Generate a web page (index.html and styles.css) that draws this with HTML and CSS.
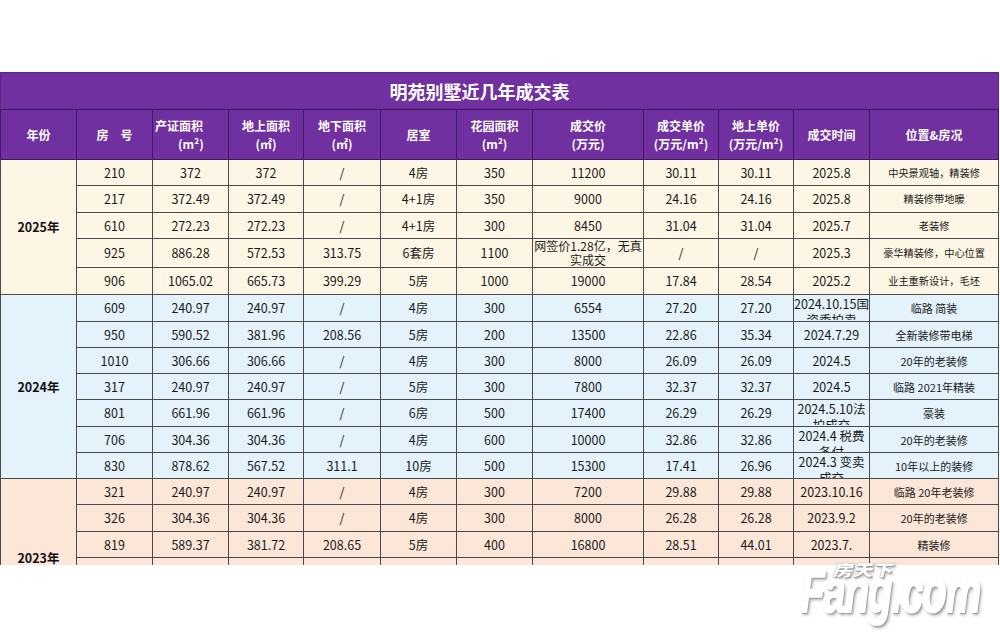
FILE: index.html
```html
<!DOCTYPE html>
<html lang="zh-CN">
<head>
<meta charset="utf-8">
<title>明苑别墅近几年成交表</title>
<link rel="stylesheet" href="styles.css">
</head>
<body>
<div class="page">
  <div class="clip">
    <table class="deals">
      <colgroup>
        <col class="c76"><col class="c76"><col class="c76"><col class="c75"><col class="c77"><col class="c76">
        <col class="c76"><col class="c111"><col class="c75"><col class="c75"><col class="c76"><col class="c129">
      </colgroup>
      <thead>
        <tr class="title-row"><th colspan="12">明苑别墅近几年成交表</th></tr>
        <tr class="head-row">
          <th>年份</th>
          <th>房　号</th>
          <th class="hl"><span class="ln">产证面积</span><span class="ln ind">(m²)</span></th>
          <th><span class="ln">地上面积</span><span class="ln">(㎡)</span></th>
          <th><span class="ln">地下面积</span><span class="ln">(㎡)</span></th>
          <th>居室</th>
          <th><span class="ln">花园面积</span><span class="ln">(m²)</span></th>
          <th><span class="ln">成交价</span><span class="ln">(万元)</span></th>
          <th><span class="ln">成交单价</span><span class="ln">(万元/m²)</span></th>
          <th><span class="ln">地上单价</span><span class="ln">(万元/m²)</span></th>
          <th>成交时间</th>
          <th>位置&amp;房况</th>
        </tr>
      </thead>
      <tbody class="g25">
        <tr class="h26"><td class="year" rowspan="5">2025年</td><td>210</td><td>372</td><td>372</td><td>/</td><td>4房</td><td>350</td><td>11200</td><td>30.11</td><td>30.11</td><td>2025.8</td><td class="pos s10">中央景观轴，精装修</td></tr>
        <tr class="h27"><td>217</td><td>372.49</td><td>372.49</td><td>/</td><td>4+1房</td><td>350</td><td>9000</td><td>24.16</td><td>24.16</td><td>2025.8</td><td class="pos s10">精装修带地暖</td></tr>
        <tr class="h26"><td>610</td><td>272.23</td><td>272.23</td><td>/</td><td>4+1房</td><td>300</td><td>8450</td><td>31.04</td><td>31.04</td><td>2025.7</td><td class="pos s10">老装修</td></tr>
        <tr class="h29"><td>925</td><td>886.28</td><td>572.53</td><td>313.75</td><td>6套房</td><td>1100</td><td class="two">网签价1.28亿，无真<br>实成交</td><td>/</td><td>/</td><td>2025.3</td><td class="pos s10">豪华精装修，中心位置</td></tr>
        <tr class="h27"><td>906</td><td>1065.02</td><td>665.73</td><td>399.29</td><td>5房</td><td>1000</td><td>19000</td><td>17.84</td><td>28.54</td><td>2025.2</td><td class="pos s10">业主重新设计，毛坯</td></tr>
      </tbody>
      <tbody class="g24">
        <tr class="h27"><td class="year" rowspan="7">2024年</td><td>609</td><td>240.97</td><td>240.97</td><td>/</td><td>4房</td><td>300</td><td>6554</td><td>27.20</td><td>27.20</td><td class="cut"><div class="cutbox">2024.10.15国<br>资委拍卖</div></td><td class="pos">临路 简装</td></tr>
        <tr class="h26"><td>950</td><td>590.52</td><td>381.96</td><td>208.56</td><td>5房</td><td>200</td><td>13500</td><td>22.86</td><td>35.34</td><td>2024.7.29</td><td class="pos">全新装修带电梯</td></tr>
        <tr class="h26"><td>1010</td><td>306.66</td><td>306.66</td><td>/</td><td>4房</td><td>300</td><td>8000</td><td>26.09</td><td>26.09</td><td>2024.5</td><td class="pos">20年的老装修</td></tr>
        <tr class="h26"><td>317</td><td>240.97</td><td>240.97</td><td>/</td><td>5房</td><td>300</td><td>7800</td><td>32.37</td><td>32.37</td><td>2024.5</td><td class="pos">临路 2021年精装</td></tr>
        <tr class="h27"><td>801</td><td>661.96</td><td>661.96</td><td>/</td><td>6房</td><td>500</td><td>17400</td><td>26.29</td><td>26.29</td><td class="cut"><div class="cutbox">2024.5.10法<br>拍成交</div></td><td class="pos">豪装</td></tr>
        <tr class="h26"><td>706</td><td>304.36</td><td>304.36</td><td>/</td><td>4房</td><td>600</td><td>10000</td><td>32.86</td><td>32.86</td><td class="cut"><div class="cutbox">2024.4 税费<br>各付</div></td><td class="pos">20年的老装修</td></tr>
        <tr class="h26"><td>830</td><td>878.62</td><td>567.52</td><td>311.1</td><td>10房</td><td>500</td><td>15300</td><td>17.41</td><td>26.96</td><td class="cut"><div class="cutbox">2024.3 变卖<br>成交</div></td><td class="pos">10年以上的装修</td></tr>
      </tbody>
      <tbody class="g23">
        <tr class="h26"><td class="year" rowspan="6">2023年</td><td>321</td><td>240.97</td><td>240.97</td><td>/</td><td>4房</td><td>300</td><td>7200</td><td>29.88</td><td>29.88</td><td>2023.10.16</td><td class="pos">临路 20年老装修</td></tr>
        <tr class="h27"><td>326</td><td>304.36</td><td>304.36</td><td>/</td><td>4房</td><td>300</td><td>8000</td><td>26.28</td><td>26.28</td><td>2023.9.2</td><td class="pos">20年的老装修</td></tr>
        <tr class="h26"><td>819</td><td>589.37</td><td>381.72</td><td>208.65</td><td>5房</td><td>400</td><td>16800</td><td>28.51</td><td>44.01</td><td>2023.7.</td><td class="pos">精装修</td></tr>
        <tr class="h26"><td></td><td></td><td></td><td></td><td>4房</td><td></td><td></td><td></td><td></td><td></td><td class="pos">精装修带地暖</td></tr>
        <tr class="h26"><td></td><td></td><td></td><td></td><td></td><td></td><td></td><td></td><td></td><td></td><td></td></tr>
        <tr class="h27"><td></td><td></td><td></td><td></td><td></td><td></td><td></td><td></td><td></td><td></td><td></td></tr>
      </tbody>
    </table>
  </div>
  <div class="watermark" aria-label="房天下 Fang.com">
    <span class="wm-cn">房天下</span>
    <span class="wm-en">Fang.com</span>
  </div>
</div>
</body>
</html>
```

FILE: styles.css
```css
html, body {
  margin: 0;
  padding: 0;
  background: #ffffff;
}

.page {
  position: relative;
  width: 1000px;
  height: 637px;
  padding-top: 72px;
  box-sizing: border-box;
  font-family: "Noto Sans CJK SC", "Noto Sans", sans-serif;
}

.clip {
  height: 493px;
  overflow: hidden;
}

.deals {
  width: 999px;
  table-layout: fixed;
  border-collapse: collapse;
  color: #1a1a1a;
  font-size: 12.5px;
}

.c75 { width: 75px; }
.c76 { width: 76px; }
.c77 { width: 77px; }
.c111 { width: 111px; }
.c129 { width: 129px; }

.title-row th {
  height: 36px;
  padding: 0 40px 0 0;
  background: #7030a0;
  color: #ffffff;
  font-size: 18px;
  font-weight: 700;
  text-align: center;
  border: 1px solid #5b2386;
  border-bottom: 1px solid #3e1560;
}

.head-row th {
  height: 49px;
  padding: 0;
  background: #7030a0;
  color: #ffffff;
  font-size: 12px;
  font-weight: 700;
  line-height: 18px;
  text-align: center;
  vertical-align: middle;
  border: 1px solid #3e1a5c;
}

.head-row .ln {
  display: block;
}

.head-row th.hl {
  text-align: left;
  padding-left: 2px;
}

.head-row .ind {
  padding-left: 23px;
}

.deals td {
  padding: 0 1px;
  text-align: center;
  vertical-align: middle;
  line-height: 14px;
  border: 1px solid #4a4a4a;
  white-space: nowrap;
  overflow: hidden;
}

.h26 { height: 26px; }
.h27 { height: 27px; }
.h29 { height: 29px; }

.g25 td { background: #fdf6e5; }
.g24 td { background: #e3f2fb; }
.g23 td { background: #fbe6d8; }

.deals td.year {
  font-weight: 700;
  font-size: 12.5px;
  color: #111111;
}

.deals td.pos {
  font-size: 11px;
}

.deals td.s10 {
  font-size: 10.2px;
}

.deals td.two {
  line-height: 14px;
  font-size: 12px;
}

.deals td.cut {
  padding: 0;
  vertical-align: top;
}

.cutbox {
  height: 25px;
  overflow: hidden;
  padding-top: 1px;
  box-sizing: border-box;
  line-height: 16px;
}

.watermark {
  position: absolute;
  left: 800px;
  top: 558px;
  width: 200px;
  height: 70px;
  pointer-events: none;
}

.wm-cn {
  position: absolute;
  left: 36px;
  top: 4px;
  font-family: "Noto Sans CJK SC", sans-serif;
  font-size: 20px;
  font-weight: 900;
  line-height: 20px;
  color: #ffffff;
  transform: scaleY(0.8) skewX(-12deg);
  transform-origin: left top;
  text-shadow: 1px 1px 0 #9a9a9a, 0 0 1px #777777, 2px 2px 3px rgba(0, 0, 0, 0.35);
}

.wm-en {
  position: absolute;
  left: 0;
  top: 2px;
  font-family: "Liberation Sans", sans-serif;
  font-size: 62px;
  font-weight: 700;
  font-style: italic;
  line-height: 62px;
  letter-spacing: -2px;
  color: #ffffff;
  transform: scaleX(0.65);
  transform-origin: left top;
  -webkit-text-stroke: 2px #ffffff;
  text-shadow: 2px 2px 0 #a0a0a0, 0 0 1px #6f6f6f, 3px 3px 4px rgba(0, 0, 0, 0.35);
  white-space: nowrap;
}
```
